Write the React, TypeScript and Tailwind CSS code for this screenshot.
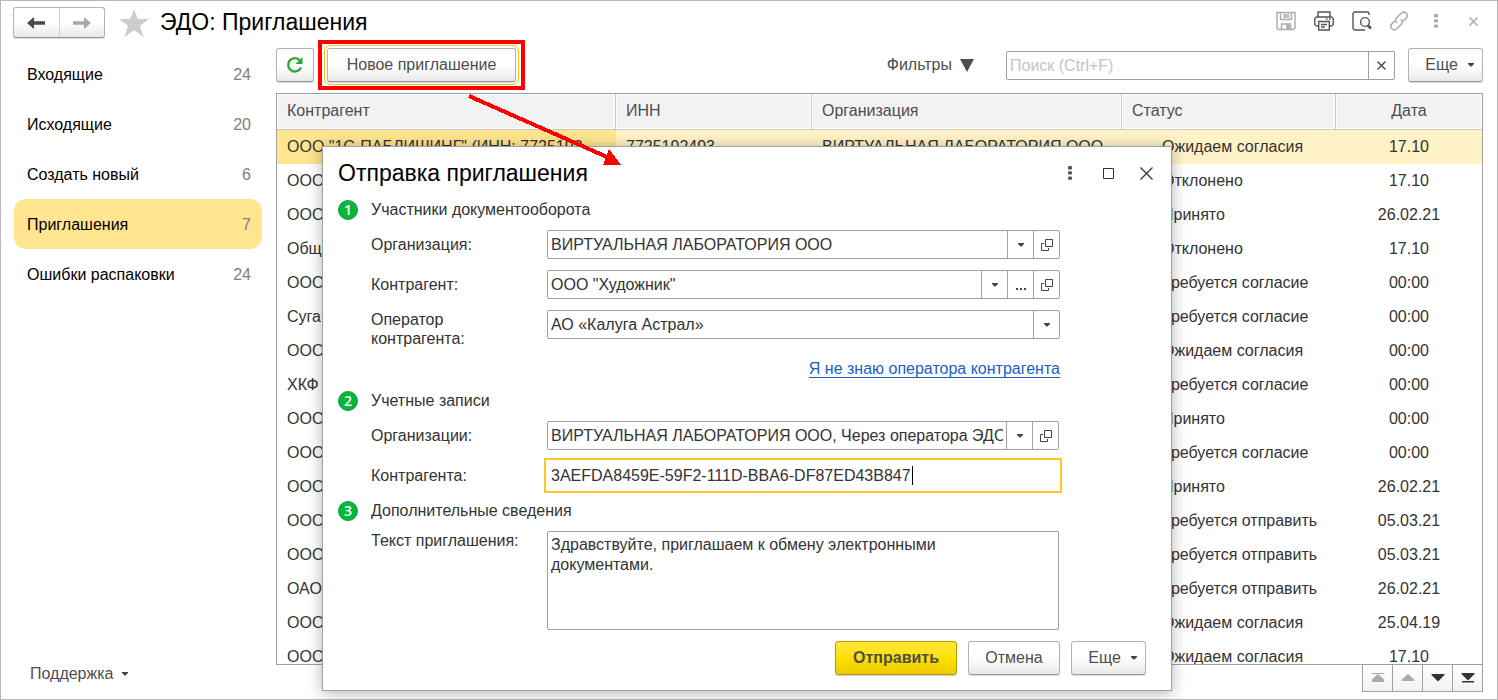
import React, { useState } from 'react';

const navItems = [
    { label: 'Входящие', count: 24 },
    { label: 'Исходящие', count: 20 },
    { label: 'Создать новый', count: 6 },
    { label: 'Приглашения', count: 7 },
    { label: 'Ошибки распаковки', count: 24 },
];

const rows = [
    { partner: 'ООО "1С-ПАБЛИШИНГ" (ИНН: 7725192', inn: '7725192493', org: 'ВИРТУАЛЬНАЯ ЛАБОРАТОРИЯ ООО', status: 'Ожидаем согласия', date: '17.10' },
    { partner: 'ООО', inn: '', org: '', status: 'Отклонено', date: '17.10' },
    { partner: 'ООО', inn: '', org: '', status: 'Принято', date: '26.02.21' },
    { partner: 'Общ', inn: '', org: '', status: 'Отклонено', date: '17.10' },
    { partner: 'ООО', inn: '', org: '', status: 'Требуется согласие', date: '00:00' },
    { partner: 'Суга', inn: '', org: '', status: 'Требуется согласие', date: '00:00' },
    { partner: 'ООО', inn: '', org: '', status: 'Ожидаем согласия', date: '00:00' },
    { partner: 'ХКФ', inn: '', org: '', status: 'Требуется согласие', date: '00:00' },
    { partner: 'ООО', inn: '', org: '', status: 'Принято', date: '00:00' },
    { partner: 'ООО', inn: '', org: '', status: 'Требуется согласие', date: '00:00' },
    { partner: 'ООО', inn: '', org: '', status: 'Принято', date: '26.02.21' },
    { partner: 'ООО', inn: '', org: '', status: 'Требуется отправить', date: '05.03.21' },
    { partner: 'ООО', inn: '', org: '', status: 'Требуется отправить', date: '05.03.21' },
    { partner: 'ОАО', inn: '', org: '', status: 'Требуется отправить', date: '26.02.21' },
    { partner: 'ООО', inn: '', org: '', status: 'Ожидаем согласия', date: '25.04.19' },
    { partner: 'ООО', inn: '', org: '', status: 'Ожидаем согласия', date: '17.10' },
];

const buttonClass =
    'h-[34px] rounded-[3px] border border-[#b3b3b3] border-b-[#999] bg-linear-to-b from-white from-50% to-[#e9e9e9] text-[#4d4d4d] shadow-[0_1px_1px_rgba(0,0,0,0.15)]';

const Caret: React.FC = () => (
    <svg width="6" height="4" viewBox="0 0 6 4" className="shrink-0" aria-hidden="true">
        <path d="M0 0h6v1L3.5 3.500h-1L0 1z" fill="#444" />
    </svg>
);

const Dots: React.FC<{ color: string }> = ({ color }) => (
    <svg width="4" height="14" viewBox="0 0 4 14" fill={color} aria-hidden="true">
        <rect width="4" height="3.4" rx="1" />
        <rect y="5.2" width="4" height="3.4" rx="1" />
        <rect y="10.4" width="4" height="3.4" rx="1" />
    </svg>
);

const OpenIcon: React.FC = () => (
    <svg width="12" height="12" viewBox="0 0 12 12" fill="none" stroke="#444" aria-hidden="true">
        <path d="M4.5 .5h7v7h-7zM3 4.500H.5v7h7V9" />
    </svg>
);

const WindowTools: React.FC = () => (
    <div className="flex items-center">
        <button className="flex w-[38px] justify-center" aria-label="Сохранить">
            <svg width="20" height="20" viewBox="0 0 20 20" fill="none" stroke="#ababab" strokeWidth="1.4">
                <path d="M1 1.500h18v15.500l-1.500 1.500h-15L1 17z" />
                <path d="M4.500 1.500v7h11v-7M7 4h6.500M7 6h6.500" />
                <path d="M5.500 18.500v-5.500h9v5.500" />
                <path d="M11 14.500h2v3h-2z" fill="#ababab" />
            </svg>
        </button>
        <button className="flex w-[38px] justify-center" aria-label="Печать">
            <svg width="20" height="20" viewBox="0 0 20 20" fill="none" stroke="#555" strokeWidth="1.4">
                <path d="M4 6V1h12v5" />
                <path d="M4.500 15H2.500L.8 13.500v-6L2.500 6h15l1.700 1.500v6L17.500 15h-2" />
                <path d="M4.700 10.500h10.600V19H4.700zM7 13.500h6M7 16h4M12 8h1.500M15 8h1.500" />
            </svg>
        </button>
        <button className="flex w-[37px] justify-center" aria-label="Просмотр">
            <svg width="20" height="20" viewBox="0 0 20 20" fill="none" stroke="#555" strokeWidth="1.4">
                <path d="M17 4V2.500L16 1H2.500L1 2.500v15L2.500 19H13" />
                <circle cx="13" cy="11" r="4.400" />
                <path d="M15.500 14l3.500 3.500" strokeWidth="2.600" />
            </svg>
        </button>
        <button className="flex w-[37px] justify-center" aria-label="Ссылка">
            <svg width="20" height="20" viewBox="0 0 20 20" fill="none" stroke="#ababab" strokeWidth="1.500" strokeLinecap="round">
                <path d="M7.800 11.500c-1.300-1.600-1.200-3.500 0-4.700l4.500-4.500c1.500-1.400 3.500-1.400 4.900 0s1.400 3.400 0 4.800L14.500 9.800" />
                <path d="M12.200 8.500c1.300 1.600 1.200 3.500 0 4.700l-4.500 4.500c-1.500 1.400-3.500 1.400-4.900 0s-1.400-3.400 0-4.800L5.500 10.200" />
            </svg>
        </button>
        <button className="flex w-[37px] justify-center" aria-label="Меню">
            <Dots color="#ababab" />
        </button>
        <button className="flex w-[38px] justify-center" aria-label="Закрыть">
            <svg width="9" height="9" viewBox="0 0 9 9" stroke="#ababab" strokeWidth="1.500">
                <path d="M.5.500l8 8M8.500.500l-8 8" />
            </svg>
        </button>
    </div>
);

const Header: React.FC = () => (
    <header className="flex h-[47px] shrink-0 items-start pt-[6px] pr-[5px] pl-3">
        <div className="flex h-[31px] w-[92px] rounded-[3px] border border-[#b3b3b3] border-b-[#999] bg-linear-to-b from-white from-50% to-[#e9e9e9] shadow-[0_1px_1px_rgba(0,0,0,0.15)]">
            <button className="flex flex-1 items-center justify-center border-r border-[#d0d0d0]" aria-label="Назад">
                <svg width="18" height="12" viewBox="0 0 18 12">
                    <path d="M0 6L7 0v4.300h11v3.400H7V12z" fill="#4a4a4a" />
                </svg>
            </button>
            <button className="flex flex-1 items-center justify-center" aria-label="Вперед">
                <svg width="18" height="12" viewBox="0 0 18 12">
                    <path d="M18 6l-7-6v4.300H0v3.400h11V12z" fill="#a8a8a8" />
                </svg>
            </button>
        </div>
        <button className="mt-[2px] ml-[14px]" aria-label="В избранное">
            <svg width="30" height="28" viewBox="0 0 30 28">
                <path d="M15 0l3.800 10H30l-9 6.800L24.500 28 15 21.200 5.500 28 9 16.800 0 10h11.200z" fill="#cccdcf" />
            </svg>
        </button>
        <h1 className="ml-[11px] text-[23px] leading-[30px] text-black">ЭДО: Приглашения</h1>
        <div className="mt-1 ml-auto">
            <WindowTools />
        </div>
    </header>
);

const Sidebar: React.FC<{ active: string; onSelect: (label: string) => void }> = ({ active, onSelect }) => (
    <aside className="flex w-[275px] shrink-0 flex-col pt-px pr-[14px] pb-[9px] pl-[13px]">
        <nav className="flex flex-col">
            {navItems.map((item) => (
                <button
                    key={item.label}
                    onClick={() => onSelect(item.label)}
                    className={`flex h-[50px] items-center justify-between rounded-xl pt-px pr-[11px] pl-[13px] ${active === item.label ? 'bg-[#ffe58f]' : ''}`}
                >
                    <span className="text-black">{item.label}</span>
                    <span className="text-[#808080]">{item.count}</span>
                </button>
            ))}
        </nav>
        <button className="mt-auto flex h-8 items-center gap-[9px] pl-4 text-[#4d4d4d]">
            Поддержка
            <Caret />
        </button>
    </aside>
);

const Toolbar: React.FC = () => (
    <div className="flex h-[45px] items-start">
        <button className={`${buttonClass} flex w-[38px] items-center justify-center`} aria-label="Обновить">
            <svg width="18" height="18" viewBox="0 0 18 18" fill="none">
                <path d="M14 4.500A6.700 6.700 0 1 0 15 11.500" stroke="#2fa836" strokeWidth="2.400" />
                <path d="M16.500 1v7h-7z" fill="#2fa836" />
            </svg>
        </button>
        <div className="relative ml-[13px]">
            <button className={`${buttonClass} w-[189px] outline outline-offset-2 outline-[#f5c518]`}>Новое приглашение</button>
            <div className="pointer-events-none absolute -inset-x-[9px] -inset-y-2 border-4 border-[#ff0000]" />
        </div>
        <button className="ml-auto flex h-[34px] items-center gap-2 text-[#4d4d4d]">
            Фильтры
            <svg width="14" height="13" viewBox="0 0 14 13" aria-hidden="true">
                <path d="M0 0h14L7 13z" fill="#4d4d4d" />
            </svg>
        </button>
        <div className="mt-[3px] ml-8 flex h-[29px] w-[389px] rounded-[2px] border border-[#a0a0a0]">
            <input
                aria-label="Поиск"
                placeholder="Поиск (Ctrl+F)"
                className="min-w-0 flex-1 px-[3px] outline-none placeholder:text-[#c4c4c4]"
            />
            <button className="flex w-[26px] items-center justify-center border-l border-[#a0a0a0]" aria-label="Очистить">
                <svg width="9" height="9" viewBox="0 0 9 9" stroke="#444" strokeWidth="1.300">
                    <path d="M.5.500l8 8M8.500.500l-8 8" />
                </svg>
            </button>
        </div>
        <button className={`${buttonClass} ml-[13px] flex w-[75px] items-center justify-center gap-[10px] pl-2`}>
            Еще
            <Caret />
        </button>
    </div>
);

const headClass = 'border-r border-b border-[#c8c8c8] px-[10px] pb-[2px] font-normal shadow-[inset_0_0_0_1px_#fff]';

const InvitationsTable: React.FC = () => (
    <div className="min-h-0 flex-1 overflow-hidden border border-[#a0a0a0]">
        <table className="w-full table-fixed border-separate border-spacing-0">
            <colgroup>
                <col />
                <col className="w-[196px]" />
                <col className="w-[310px]" />
                <col className="w-[214px]" />
                <col className="w-[146px]" />
            </colgroup>
            <thead>
                <tr className="h-[36px] bg-[#f2f2f2] text-left text-[#4d4d4d]">
                    <th className={headClass}>Контрагент</th>
                    <th className={headClass}>ИНН</th>
                    <th className={headClass}>Организация</th>
                    <th className={headClass}>Статус</th>
                    <th className={`${headClass} border-r-0 text-center`}>Дата</th>
                </tr>
            </thead>
            <tbody>
                {rows.map((row, index) => (
                    <tr key={index} className={`h-[34px] whitespace-nowrap text-[#333] ${index === 0 ? 'bg-[#fff2c7]' : ''}`}>
                        <td className={`overflow-hidden px-[10px] ${index === 0 ? 'bg-[#ffe58f]' : ''}`}>{row.partner}</td>
                        <td className="px-[10px]">{row.inn}</td>
                        <td className="px-[10px]">{row.org}</td>
                        <td className="pl-10">{row.status}</td>
                        <td className="text-center">{row.date}</td>
                    </tr>
                ))}
            </tbody>
        </table>
    </div>
);

const pagerButtons = [
    { label: 'В начало', path: 'M.5 1h13v1H.5zM7 2l6.500 6H13v2H1V8H.5z', color: '#aaa' },
    { label: 'Назад', path: 'M7 2l6.500 6v1H.5V8z', color: '#aaa' },
    { label: 'Вперед', path: 'M.5 2h13v1L7 9.500.5 3z', color: '#333' },
    { label: 'В конец', path: 'M.5 1h13v1L7 8.500.5 2zM1 9h12v1.500H1z', color: '#333' },
];

const Pager: React.FC = () => (
    <div className="-mt-px flex h-[28px] self-end border border-[#a0a0a0] bg-white">
        {pagerButtons.map((button) => (
            <button
                key={button.label}
                aria-label={button.label}
                className="flex w-[30px] items-center justify-center border-l border-[#a0a0a0] bg-linear-to-b from-white to-[#f2f2f2] first:w-[29px] first:border-l-0"
            >
                <svg width="14" height="12" viewBox="0 0 14 12">
                    <path d={button.path} fill={button.color} />
                </svg>
            </button>
        ))}
    </div>
);

const SectionTitle: React.FC<{ number: number; children: React.ReactNode }> = ({ number, children }) => (
    <h3 className="flex h-[22px] items-center">
        <span className="mr-[13px] flex h-5 w-5 items-center justify-center rounded-full border border-[#1f9a44] bg-[#00b93c] font-['Open_Sans',sans-serif] text-[14px] leading-none font-semibold text-white">
            {number}
        </span>
        {children}
    </h3>
);

const fieldBox = 'flex h-[29px] min-w-0 flex-1 rounded-[2px] border border-[#a0a0a0] bg-white';
const fieldButton = 'flex w-[26px] shrink-0 items-center justify-center border-l border-[#a0a0a0]';

const Field: React.FC<{ id: string; label: string; children: React.ReactNode }> = ({ id, label, children }) => (
    <div className="flex h-[29px] items-start pl-[33px]">
        <label htmlFor={id} className="flex min-h-[29px] w-[176px] shrink-0 items-center pr-16 leading-[19px]">
            {label}
        </label>
        {children}
    </div>
);

const LookupField: React.FC<{ id: string; label: string; value: string; browse?: boolean }> = ({ id, label, value, browse }) => (
    <Field id={id} label={label}>
        <div className={fieldBox}>
            <input id={id} defaultValue={value} className="min-w-0 flex-1 px-[3px] outline-none" />
            <button className={fieldButton} aria-label="Выбрать из списка">
                <Caret />
            </button>
            {browse && (
                <button className={fieldButton} aria-label="Показать все">
                    <svg width="10" height="12" viewBox="0 0 10 12" fill="#444">
                        <path d="M0 9h2v2H0zM4 9h2v2H4zM8 9h2v2H8z" />
                    </svg>
                </button>
            )}
            <button className={fieldButton} aria-label="Открыть">
                <OpenIcon />
            </button>
        </div>
    </Field>
);

const InvitationDialog: React.FC = () => (
    <div
        role="dialog"
        aria-labelledby="dialog-title"
        className="absolute top-[145px] left-[321px] w-[850px] border border-[#a0a0a0] bg-white pr-[25px] pb-[15px] pl-[15px] text-[#333] shadow-[0_2px_14px_rgba(0,0,0,0.3)]"
    >
        <div className="flex h-[52px] items-center">
            <h2 id="dialog-title" className="text-[23px] text-black">
                Отправка приглашения
            </h2>
            <div className="-mr-[19px] ml-auto flex items-center">
                <button className="flex w-[38px] justify-center" aria-label="Меню">
                    <Dots color="#555" />
                </button>
                <button className="flex w-[38px] justify-center" aria-label="Развернуть">
                    <svg width="11" height="11" viewBox="0 0 11 11" fill="none" stroke="#333">
                        <path d="M.5.500h10v10H.5z" />
                    </svg>
                </button>
                <button className="flex w-[38px] justify-center" aria-label="Закрыть">
                    <svg width="13" height="13" viewBox="0 0 13 13" stroke="#333" strokeWidth="1.300">
                        <path d="M.5.500l12 12M12.500.500l-12 12" />
                    </svg>
                </button>
            </div>
        </div>

        <div className="pr-[86px]">
            <SectionTitle number={1}>Участники документооборота</SectionTitle>
            <div className="mt-[9px] flex flex-col gap-[11px]">
                <LookupField id="organization" label="Организация:" value="ВИРТУАЛЬНАЯ ЛАБОРАТОРИЯ ООО" />
                <LookupField id="partner" label="Контрагент:" value={'ООО "Художник"'} browse />
                <Field id="operator" label="Оператор контрагента:">
                    <div className={`${fieldBox} relative`}>
                        <select id="operator" className="min-w-0 flex-1 appearance-none px-[3px] outline-none">
                            <option>АО «Калуга Астрал»</option>
                        </select>
                        <span className={`${fieldButton} pointer-events-none absolute inset-y-0 right-0`}>
                            <Caret />
                        </span>
                    </div>
                </Field>
            </div>
            <div className="mt-5 flex h-5 items-center justify-end">
                <a href="#operator" className="text-[#1a5fbf] underline underline-offset-[3px]">
                    Я не знаю оператора контрагента
                </a>
            </div>
        </div>

        <div className="mt-[11px] pr-[87px]">
            <SectionTitle number={2}>Учетные записи</SectionTitle>
            <div className="mt-[9px] flex flex-col gap-[11px]">
                <LookupField id="organization-account" label="Организации:" value="ВИРТУАЛЬНАЯ ЛАБОРАТОРИЯ ООО, Через оператора ЭДО Калуга Астрал" />
                <Field id="partner-account" label="Контрагента:">
                    <div className="relative flex h-[29px] min-w-0 flex-1">
                        <input
                            id="partner-account"
                            defaultValue="3AEFDA8459E-59F2-111D-BBA6-DF87ED43B847"
                            className="min-w-0 flex-1 px-1 outline-2 outline-offset-1 outline-[#fcc821]"
                        />
                        <span className="absolute inset-y-[5px] left-[365px] w-px bg-black" />
                    </div>
                </Field>
            </div>
        </div>

        <div className="mt-[10px] pr-[87px]">
            <SectionTitle number={3}>Дополнительные сведения</SectionTitle>
            <div className="mt-[9px] flex pl-[33px]">
                <label htmlFor="message" className="w-[176px] shrink-0 leading-[19px]">
                    Текст приглашения:
                </label>
                <textarea
                    id="message"
                    defaultValue="Здравствуйте, приглашаем к обмену электронными документами."
                    className="h-[99px] min-w-0 flex-1 resize-none rounded-[2px] border border-[#a0a0a0] px-[3px] py-[3px] pr-20 leading-5 outline-none"
                />
            </div>
        </div>

        <div className="mt-[11px] flex justify-end gap-[11px]">
            <button className="h-[34px] w-[122px] rounded-[3px] border border-[#b39b00] bg-linear-to-b from-[#ffe734] via-[#ffe000] to-[#eccc00] font-bold text-[#4d4d4d] shadow-[0_1px_1px_rgba(0,0,0,0.2)]">
                Отправить
            </button>
            <button className={`${buttonClass} w-[92px]`}>Отмена</button>
            <button className={`${buttonClass} flex w-[75px] items-center justify-center gap-[10px] pl-2`}>
                Еще
                <Caret />
            </button>
        </div>
    </div>
);

const App: React.FC = () => {
    const [active, setActive] = useState('Приглашения');

    return (
        <div className="relative flex h-screen min-h-[700px] flex-col border border-[#b8b8b8] bg-white font-['Liberation_Sans',Arial,sans-serif] text-[16px] leading-5">
            <Header />
            <div className="flex min-h-0 flex-1">
                <Sidebar active={active} onSelect={setActive} />
                <main className="flex min-w-0 flex-1 flex-col pr-[14px] pb-[7px]">
                    <Toolbar />
                    <InvitationsTable />
                    <Pager />
                </main>
            </div>
            <InvitationDialog />
            <svg
                width="160"
                height="80"
                viewBox="0 0 160 80"
                className="pointer-events-none absolute top-[91px] left-[464px]"
                shapeRendering="crispEdges"
                aria-hidden="true"
            >
                <path d="M4 4l138 61" stroke="#ff0000" strokeWidth="4" />
                <path d="M144 57l12 16h-18z" fill="#ff0000" />
            </svg>
        </div>
    );
};

export default App;
